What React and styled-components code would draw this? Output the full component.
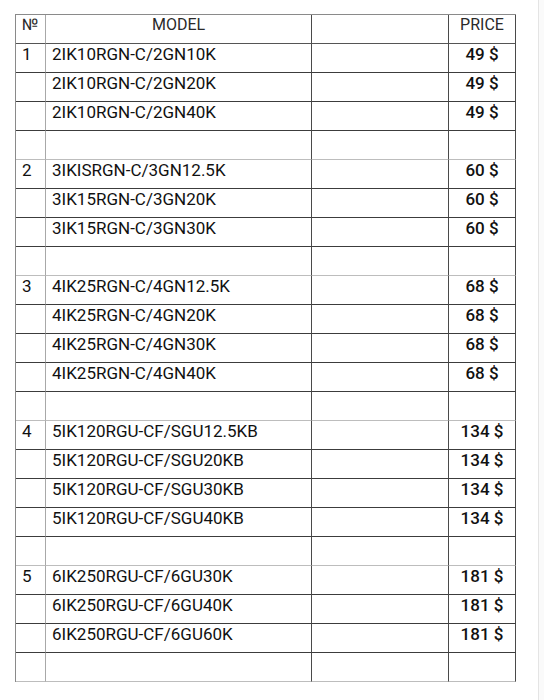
import styled, { createGlobalStyle } from "styled-components";

const GlobalStyle = createGlobalStyle`
    html, body {
        margin: 0;
        padding: 0;
        background: #fafafa;
    }
    body {
        font-family: Roboto, "Liberation Sans", Arial, sans-serif;
        color: #111;
    }
`;

const Page = styled.div`
    display: flex;
    min-height: 700px;
`;
const Sheet = styled.div`
    width: 539px;
    background: #fff;
    border-right: 1px solid #e4e4e4;
    padding: 14px 0 0 15px;
    box-sizing: border-box;
`;
const Table = styled.div`
    display: grid;
    grid-template-columns: 30px 266px 137px 67px;
    width: 501px;
    border-top: 1px solid #8a8a8a;
    border-left: 1px solid #8a8a8a;
    box-sizing: border-box;
`;
const Cell = styled.div`
    height: 29px;
    box-sizing: border-box;
    border-right: 1px solid ${(p) => (p.$light ? "#a8a8a8" : "#4a4a4a")};
    border-bottom: 1px solid ${(p) => (p.$soft ? "#bdbdbd" : "#3c3c3c")};
    padding: 0 6px;
    font-size: 17px;
    line-height: 20px;
    white-space: nowrap;
    overflow: hidden;
    text-align: ${(p) => (p.$center ? "center" : "left")};
    font-weight: ${(p) => (p.$bold ? 500 : 400)};
`;
const HeadCell = styled(Cell)`
    font-size: 16px;
    line-height: 18px;
    padding-top: 1px;
    color: #2a2a2a;
    border-bottom-color: #555;
`;

const groups = [
    { no: 1, price: "49 $", models: ["2IK10RGN-C/2GN10K", "2IK10RGN-C/2GN20K", "2IK10RGN-C/2GN40K"] },
    { no: 2, price: "60 $", models: ["3IKISRGN-C/3GN12.5K", "3IK15RGN-C/3GN20K", "3IK15RGN-C/3GN30K"] },
    {
        no: 3,
        price: "68 $",
        models: ["4IK25RGN-C/4GN12.5K", "4IK25RGN-C/4GN20K", "4IK25RGN-C/4GN30K", "4IK25RGN-C/4GN40K"],
    },
    {
        no: 4,
        price: "134 $",
        models: ["5IK120RGU-CF/SGU12.5KB", "5IK120RGU-CF/SGU20KB", "5IK120RGU-CF/SGU30KB", "5IK120RGU-CF/SGU40KB"],
    },
    { no: 5, price: "181 $", models: ["6IK250RGU-CF/6GU30K", "6IK250RGU-CF/6GU40K", "6IK250RGU-CF/6GU60K"] },
];

function Row({ no, model, price, soft }) {
    return (
        <>
            <Cell $light $soft={soft}>{no}</Cell>
            <Cell $soft={soft}>{model}</Cell>
            <Cell $soft={soft} />
            <Cell $center $bold $soft={soft}>{price}</Cell>
        </>
    );
}

export default function App() {
    return (
        <>
            <GlobalStyle />
            <Page>
                <Sheet>
                    <Table>
                        <HeadCell $light>№</HeadCell>
                        <HeadCell $center>MODEL</HeadCell>
                        <HeadCell />
                        <HeadCell $center>PRICE</HeadCell>
                        {groups.map((g) => (
                            <>
                                {g.models.map((m, i) => (
                                    <Row
                                        key={m}
                                        no={i === 0 ? g.no : ""}
                                        model={m}
                                        price={g.price}
                                    />
                                ))}
                                <Row key={`blank-${g.no}`} no="" model="" price="" soft />
                            </>
                        ))}
                    </Table>
                </Sheet>
            </Page>
        </>
    );
}
